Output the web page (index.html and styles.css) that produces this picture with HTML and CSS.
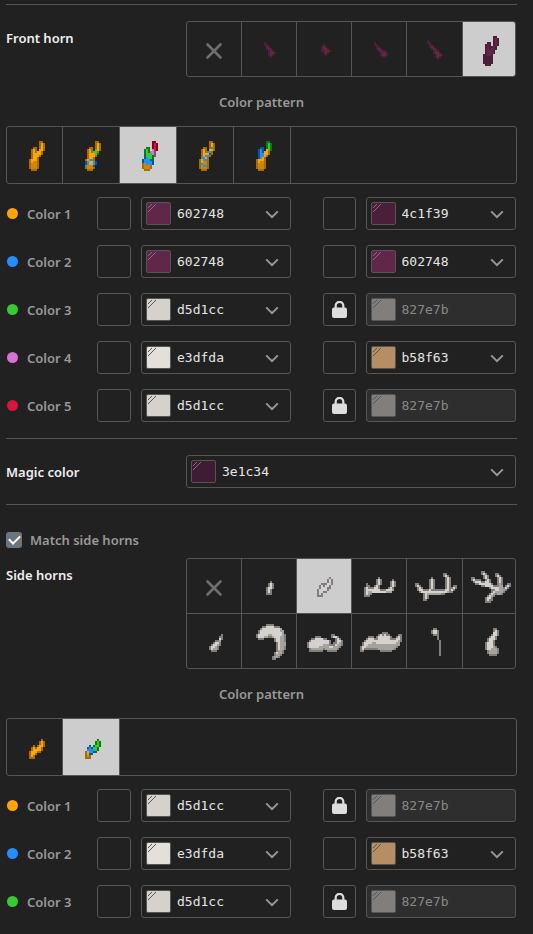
FILE: index.html
```html
<!DOCTYPE html>
<html lang="en">
<head>
<meta charset="utf-8">
<meta name="viewport" content="width=device-width, initial-scale=1">
<title>Horn editor</title>
<link rel="stylesheet" href="styles.css">
</head>
<body>
<svg class="symbols" aria-hidden="true">
  <symbol id="lock" viewBox="0 0 15 17"><path d="M3.7 8V4.6a3.8 3.8 0 0 1 7.6 0V8" fill="none" stroke="currentColor" stroke-width="2.2"/><rect y="6.6" width="15" height="10.4" rx="2" fill="currentColor"/></symbol>
  <symbol id="chevron" viewBox="0 0 14 9"><path d="M1.2 1.3 7 7.2l5.800-5.900" fill="none" stroke="currentColor" stroke-width="1.900"/></symbol>
  <symbol id="hatch" viewBox="0 0 9 9"><path d="M1 5 5 1M1 9 9 1" fill="none" stroke="currentColor" stroke-width="1"/></symbol>
  <symbol id="none" viewBox="0 0 54 54"><path d="m20.500 22.500 13 13m0-13-13 13" fill="none" stroke="#6f6f6f" stroke-width="2.600" stroke-linecap="round"/></symbol>
</svg>
<main class="editor">
  <hr>
  <section class="field-row">
    <h2 class="title">Front horn</h2>
    <div class="picker" id="front-types">
      <button class="cell" aria-label="None"><svg><use href="#none"/></svg></button>
      <button class="cell" aria-label="Horn 1" data-sprite="front1"></button>
      <button class="cell" aria-label="Horn 2" data-sprite="front2"></button>
      <button class="cell" aria-label="Horn 3" data-sprite="front3"></button>
      <button class="cell" aria-label="Horn 4" data-sprite="front4"></button>
      <button class="cell selected" aria-label="Horn 5" data-sprite="front5"></button>
    </div>
  </section>
  <h3 class="subtitle">Color pattern</h3>
  <div class="patterns">
    <button class="cell" aria-label="Pattern 1" data-sprite="pattern1"></button>
    <button class="cell" aria-label="Pattern 2" data-sprite="pattern2"></button>
    <button class="cell selected" aria-label="Pattern 3" data-sprite="pattern3"></button>
    <button class="cell" aria-label="Pattern 4" data-sprite="pattern4"></button>
    <button class="cell" aria-label="Pattern 5" data-sprite="pattern5"></button>
  </div>
  <div class="colors">
    <div class="color-row">
      <label class="name" for="f1"><i class="dot orange"></i>Color 1</label>
      <div class="pair"><button class="toggle" aria-label="Lock fill"></button><div class="color"><span class="swatch" style="background:#602748"><svg><use href="#hatch"/></svg></span><input id="f1" value="602748"><button class="open" aria-label="Choose color"><svg><use href="#chevron"/></svg></button></div></div>
      <div class="pair"><button class="toggle" aria-label="Lock outline"></button><div class="color"><span class="swatch" style="background:#4c1f39"><svg><use href="#hatch"/></svg></span><input aria-label="Outline 1" value="4c1f39"><button class="open" aria-label="Choose color"><svg><use href="#chevron"/></svg></button></div></div>
    </div>
    <div class="color-row">
      <label class="name" for="f2"><i class="dot blue"></i>Color 2</label>
      <div class="pair"><button class="toggle" aria-label="Lock fill"></button><div class="color"><span class="swatch" style="background:#602748"><svg><use href="#hatch"/></svg></span><input id="f2" value="602748"><button class="open" aria-label="Choose color"><svg><use href="#chevron"/></svg></button></div></div>
      <div class="pair"><button class="toggle" aria-label="Lock outline"></button><div class="color"><span class="swatch" style="background:#602748"><svg><use href="#hatch"/></svg></span><input aria-label="Outline 2" value="602748"><button class="open" aria-label="Choose color"><svg><use href="#chevron"/></svg></button></div></div>
    </div>
    <div class="color-row">
      <label class="name" for="f3"><i class="dot green"></i>Color 3</label>
      <div class="pair"><button class="toggle" aria-label="Lock fill"></button><div class="color"><span class="swatch light" style="background:#d5d1cc"><svg><use href="#hatch"/></svg></span><input id="f3" value="d5d1cc"><button class="open" aria-label="Choose color"><svg><use href="#chevron"/></svg></button></div></div>
      <div class="pair"><button class="toggle" aria-label="Unlock outline"><svg><use href="#lock"/></svg></button><div class="color locked"><span class="swatch light" style="background:#827e7b"><svg><use href="#hatch"/></svg></span><input aria-label="Outline 3" value="827e7b" disabled></div></div>
    </div>
    <div class="color-row">
      <label class="name" for="f4"><i class="dot orchid"></i>Color 4</label>
      <div class="pair"><button class="toggle" aria-label="Lock fill"></button><div class="color"><span class="swatch light" style="background:#e3dfda"><svg><use href="#hatch"/></svg></span><input id="f4" value="e3dfda"><button class="open" aria-label="Choose color"><svg><use href="#chevron"/></svg></button></div></div>
      <div class="pair"><button class="toggle" aria-label="Lock outline"></button><div class="color"><span class="swatch light" style="background:#b58f63"><svg><use href="#hatch"/></svg></span><input aria-label="Outline 4" value="b58f63"><button class="open" aria-label="Choose color"><svg><use href="#chevron"/></svg></button></div></div>
    </div>
    <div class="color-row">
      <label class="name" for="f5"><i class="dot crimson"></i>Color 5</label>
      <div class="pair"><button class="toggle" aria-label="Lock fill"></button><div class="color"><span class="swatch light" style="background:#d5d1cc"><svg><use href="#hatch"/></svg></span><input id="f5" value="d5d1cc"><button class="open" aria-label="Choose color"><svg><use href="#chevron"/></svg></button></div></div>
      <div class="pair"><button class="toggle" aria-label="Unlock outline"><svg><use href="#lock"/></svg></button><div class="color locked"><span class="swatch light" style="background:#827e7b"><svg><use href="#hatch"/></svg></span><input aria-label="Outline 5" value="827e7b" disabled></div></div>
    </div>
  </div>
  <hr>
  <section class="field-row">
    <label class="title" for="magic">Magic color</label>
    <div class="color"><span class="swatch" style="background:#3e1c34"><svg><use href="#hatch"/></svg></span><input id="magic" value="3e1c34"><button class="open" aria-label="Choose color"><svg><use href="#chevron"/></svg></button></div>
  </section>
  <hr>
  <div class="match"><input type="checkbox" id="match" checked><label for="match">Match side horns</label></div>
  <section class="field-row">
    <h2 class="title">Side horns</h2>
    <div class="picker two-lines">
      <button class="cell" aria-label="None"><svg><use href="#none"/></svg></button>
      <button class="cell" aria-label="Side 1" data-sprite="side1"></button>
      <button class="cell selected" aria-label="Side 2" data-sprite="side2"></button>
      <button class="cell" aria-label="Side 3" data-sprite="side3"></button>
      <button class="cell" aria-label="Side 4" data-sprite="side4"></button>
      <button class="cell" aria-label="Side 5" data-sprite="side5"></button>
      <button class="cell" aria-label="Side 6" data-sprite="side6"></button>
      <button class="cell" aria-label="Side 7" data-sprite="side7"></button>
      <button class="cell" aria-label="Side 8" data-sprite="side8"></button>
      <button class="cell" aria-label="Side 9" data-sprite="side9"></button>
      <button class="cell" aria-label="Side 10" data-sprite="side10"></button>
      <button class="cell" aria-label="Side 11" data-sprite="side11"></button>
    </div>
  </section>
  <h3 class="subtitle">Color pattern</h3>
  <div class="patterns">
    <button class="cell" aria-label="Pattern 1" data-sprite="sidePattern1"></button>
    <button class="cell selected" aria-label="Pattern 2" data-sprite="sidePattern2"></button>
  </div>
  <div class="colors">
    <div class="color-row">
      <label class="name" for="s1"><i class="dot orange"></i>Color 1</label>
      <div class="pair"><button class="toggle" aria-label="Lock fill"></button><div class="color"><span class="swatch light" style="background:#d5d1cc"><svg><use href="#hatch"/></svg></span><input id="s1" value="d5d1cc"><button class="open" aria-label="Choose color"><svg><use href="#chevron"/></svg></button></div></div>
      <div class="pair"><button class="toggle" aria-label="Unlock outline"><svg><use href="#lock"/></svg></button><div class="color locked"><span class="swatch light" style="background:#827e7b"><svg><use href="#hatch"/></svg></span><input aria-label="Side outline 1" value="827e7b" disabled></div></div>
    </div>
    <div class="color-row">
      <label class="name" for="s2"><i class="dot blue"></i>Color 2</label>
      <div class="pair"><button class="toggle" aria-label="Lock fill"></button><div class="color"><span class="swatch light" style="background:#e3dfda"><svg><use href="#hatch"/></svg></span><input id="s2" value="e3dfda"><button class="open" aria-label="Choose color"><svg><use href="#chevron"/></svg></button></div></div>
      <div class="pair"><button class="toggle" aria-label="Lock outline"></button><div class="color"><span class="swatch light" style="background:#b58f63"><svg><use href="#hatch"/></svg></span><input aria-label="Side outline 2" value="b58f63"><button class="open" aria-label="Choose color"><svg><use href="#chevron"/></svg></button></div></div>
    </div>
    <div class="color-row">
      <label class="name" for="s3"><i class="dot green"></i>Color 3</label>
      <div class="pair"><button class="toggle" aria-label="Lock fill"></button><div class="color"><span class="swatch light" style="background:#d5d1cc"><svg><use href="#hatch"/></svg></span><input id="s3" value="d5d1cc"><button class="open" aria-label="Choose color"><svg><use href="#chevron"/></svg></button></div></div>
      <div class="pair"><button class="toggle" aria-label="Unlock outline"><svg><use href="#lock"/></svg></button><div class="color locked"><span class="swatch light" style="background:#827e7b"><svg><use href="#hatch"/></svg></span><input aria-label="Side outline 3" value="827e7b" disabled></div></div>
    </div>
  </div>
</main>
<script src="sprites.js"></script>
</body>
</html>
```
FILE: styles.css
```css
* { box-sizing: border-box; }
body {
  margin: 0;
  background: #212121;
  color: #999;
  font: 600 13px/20px "Noto Sans", "Open Sans", sans-serif;
}
button { padding: 0; border: 0; background: none; color: inherit; font: inherit; cursor: pointer; }
.symbols { display: none; }
.editor { padding: 4px 16px 16px 6px; }
hr { height: 1px; margin: 16px 0; border: 0; background: #555; }
.editor > hr:first-child { margin-top: 0; }

.field-row { display: flex; margin-right: 1px; }
.title { flex: 0 0 180px; margin: 0; padding-top: 7px; color: #f0f0f0; font-size: 13px; font-weight: 600; line-height: 20px; }
.field-row > .color { flex: 1; }

.picker {
  flex: 1;
  display: grid;
  grid-template-columns: repeat(4, 55px) 56px 1fr;
  grid-template-rows: 54px;
  border: 1px solid #555;
  border-radius: 3px;
  overflow: hidden;
}
.picker.two-lines { grid-template-rows: 55px 54px; }
.two-lines .cell:nth-child(-n+6) { border-bottom: 1px solid #555; }
.cell { display: block; min-width: 0; border-right: 1px solid #555; overflow: hidden; }
.picker .cell:nth-child(6n) { border-right: 0; }
.picker .cell { display: flex; align-items: flex-start; justify-content: flex-start; }
.cell svg { flex: none; display: block; width: 54px; height: 54px; }
.selected { background: #cdcdcd; }

.subtitle { margin: 15px 0 14px; font-size: 13px; font-weight: 600; line-height: 20px; text-align: center; }
.patterns { display: flex; height: 58px; border: 1px solid #555; border-radius: 3px; overflow: hidden; }
.patterns .cell { flex: 0 0 57px; display: flex; align-items: flex-start; justify-content: flex-start; }
.patterns .cell:first-child { flex-basis: 56px; }

.colors { display: grid; grid-template-columns: minmax(0, 1fr); gap: 15px; margin: 13px 1px 0 0; }
.color-row { display: flex; align-items: center; }
.name { flex: 0 0 91px; display: flex; align-items: center; gap: 9px; padding-left: 1px; }
.dot { width: 11px; height: 11px; border-radius: 50%; }
.orange { background: #ffa500; }
.blue { background: #1e90ff; }
.green { background: #32cd32; }
.orchid { background: #da70d6; }
.crimson { background: #dc143c; }
.pair { flex: 1; min-width: 0; display: flex; gap: 10px; }
.pair + .pair { margin-left: 32px; }
.toggle { flex: 0 0 34px; display: grid; place-items: center; height: 33px; border: 1px solid #555; border-radius: 3px; color: #ddd; }
.pair + .pair .toggle { flex-basis: 33px; }
.toggle svg { width: 15px; height: 17px; }
.color { flex: 1; min-width: 0; display: flex; align-items: center; height: 33px; padding: 4px; border: 1px solid #555; border-radius: 3px; }
.swatch { flex: 0 0 25px; align-self: stretch; border: 1px solid #555; border-radius: 2px; color: #8a6a7e; }
.swatch.light { color: #555; }
.swatch svg { display: block; width: 9px; height: 9px; }
.color input { flex: 1; min-width: 0; padding: 0 0 0 6px; border: 0; outline: 0; background: none; color: #e6e6e6; font: 13px/20px "DejaVu Sans Mono", monospace; }
.open { flex: 0 0 28px; display: grid; place-items: center; height: 23px; padding-top: 2px; color: #999; }
.open svg { width: 14px; height: 9px; }
.locked { background: #2e2e2e; }
.locked input { color: #888; }

.match { display: flex; align-items: center; gap: 8px; margin: 25px 0 8px; }
.match input { appearance: none; width: 16px; height: 16px; margin: 0; border-radius: 3px; background: #6c757d; display: grid; place-items: center; }
.match input:checked::before { content: ""; width: 9px; height: 5px; margin-bottom: 3px; border: solid #fff; border-width: 0 0 2px 2px; transform: rotate(-45deg); }
```
FILE: sprites.js
```js
// Pixel art: [left, top, rows]; every character is one 2px square.
const palette = {
  v: '#602748', V: '#4c1f39',
  o: '#ffa500', q: '#d08600', O: '#a86c00',
  b: '#1e90ff', B: '#0a559f', g: '#32cd32', G: '#087d08',
  p: '#da70d6', P: '#8e478c', r: '#dc143c', R: '#86001c',
  l: '#d5d1cc', m: '#a6a29d', d: '#827e7b'
};
const sprites = {
  front1: [22, 20, ['V.....', 'VV....', '.vV...', '.VvV..', '..VvV.', '..VvvV', '..VvV.', '...V..']],
  front2: [24, 22, ['.V...', 'VvV..', 'VvvV.', 'VVvvV', '.VvV.', '..V..']],
  front3: [22, 20, ['V......', 'VV.....', '.VV....', '.VvV...', '..VvVV.', '...VvvV', '...VvvV', '....VV.']],
  front4: [20, 18, ['V.......', 'VV......', '.VV.....', '.VvV....', '..VvV...', '...VvV..', '...VvvV.', '....VvvV', '....VvV.', '.....V..']],
  front5: [20, 14, ['.....VV.', '.....VvV', '.....VvV', '..VV.VvV', '.VvV.VvV', '.VvVVvV.', '.VvVvvV.', '.VvvvV..', '.VvvvV..', 'VVvvV...', 'VVVVV...', 'VVVVV...', 'VVVVV...', 'VVVVV...', '.VVV....']],
  pattern1: [22, 14, ['.....OO.', '.....OoO', '.....OoO', '..OO.OoO', '.OoO.ooO', '.OoOooO.', '.OooooO.', '.OoooO..', '.OooO...', 'OoooO...', 'OoqqO...', 'OqqqO...', 'OqqqO...', 'OqqqO...', '.OOO....']],
  pattern2: [22, 14, ['.....OO.', '.....OoO', '.....OoO', '..OO.OoO', '.OoO.goO', '.OoOggO.', '.OooogG.', '.OoooO..', '.OooO...', 'OobbO...', 'BboobB..', 'BboobB..', 'bqqqB...', 'OqqqO...', '.OOO....']],
  pattern3: [22, 14, ['.....RR.', '.....RrR', '.....RrR', '..GG.RrR', '.GgG.prR', '.GgGppP.', '.GgggpP.', '.BgggGP.', '.BbggG..', 'BbbbGB..', 'BbbbbB..', 'OqbbbB..', 'OqqqO...', 'OqqqO...', '.OOO....']],
  pattern4: [22, 14, ['.....OO.', '.....OoO', '.....OoO', '..OO.ObO', '.OoO.ooO', '.OoObbO.', '.OoooBO.', '.OobbO..', '.bboO...', 'OobbO...', 'OoqqO...', 'ObqqO...', 'OqbbO...', 'OqqqO...', '.OOO....']],
  pattern5: [22, 14, ['.....GG.', '.....GgG', '.....GgG', '..BB.GgG', '.BbB.ogG', '.BbBooO.', '.BbbooO.', '.BbboO..', '.BboO...', 'OoooO...', 'OoqqO...', 'OqqqO...', 'OqqqO...', 'OqqqO...', '.OOO....']],
  side1: [24, 22, ['..d.', '.dld', '.dld', 'dlld', 'dld.', 'dld.', 'ddd.']],
  side2: [20, 18, ['......d.', '.....dld', '.....dld', '..dddlld', '.dldlld.', '.dllldd.', 'dlllld..', 'dlldd...', 'dld.....', 'ddd.....']],
  side3: [12, 18, ['.......d........', '......dld.....d.', '......dld....dld', '.d....dld....dld', '.dd..dld.....dld', 'dldddlld....dld.', 'dllllllldddlllm.', 'dlmmlllllllmmm..', 'dlmd............', 'ddd.............']],
  side4: [8, 14, ['..............dd.....', '..............dld....', '........d......dld...', '.......dld.....dld...', '.......dld.....dld...', 'dd.....dld.....dld...', 'dld....dld.....dld.dd', '.dld...dld.....dlddld', '.dlldddldddddddlldld.', '..dlllllllllllllmdd..', '....dlmmmmmmmdd......', '....dld..............', '....dld..............', '....dd...............']],
  side5: [8, 12, ['.....dd.............', '.....dld....dd......', '......dld...dld.....', 'dd....dld....dld....', 'dlddd..dld...dld....', '.dlllddlld...dld....', '..ddlllllld..dmd..dd', '.....ddlllldddmm.dld', '.........dllllmmdld.', '..........ddllmmmd..', '..........dlmmmmd...', '.........dlmdmmd....', '........dlmd........', '.......dlld.........', '.......dldd.........', '.......ddd..........']],
  side6: [22, 20, ['......d', '.....dd', '.....ld', '...ddm.', '..dlld.', '.dllmd.', 'dllmd..', 'dlmmd..', '.ddd...']],
  side7: [14, 10, ['.....dddd......', '...ddllllddd...', '..dlllllllllm..', '.dllllllllllmm.', '.dlllllllllllm.', 'dlllllmmlllllmd', 'dlllmmddmlllmmd', '.ddd.....dllmmd', '.........dllmmd', '..........dlmmm', '..........dlmmm', '..........dlmmd', '..........dlmmd', '..........dmmd.', '.........dlmmd.', '.........dmmd..', '........dmmd...', '........dd.....']],
  side8: [10, 20, ['............dd....', '....ddd.....dlld..', '..ddlllldd....dld.', '.dllllllllld..dlld', 'dlllllllllld.ddlmd', 'dlllllllmmmdddlmmd', 'dlllllmmmmmllmmmd.', '.dmmmmmmdmmmmmmd..', '.ddddddd..ddddd...']],
  side9: [8, 18, ['...........ddd.......', '.........dldldd....dd', '....ddd.dlllllld..dld', '...dlllddlllllldddlld', '..dllllllllllllllllmd', '.dllllmmllllllllllmm.', '.dllmmmmmmmmmmmmmmmm.', 'dllmmmmmmmmmmmmmmmd..', 'dldddddddmmmmmmmmd...', 'dd........dddddd.....']],
  side10: [24, 14, ['.dd..', 'dlld.', 'dlld.', '.ddd.', '...d.', '...d.', '....d', '....d', '....d', '....d', '....d', '....d', '....d', '....d']],
  side11: [22, 14, ['....dd.', '....dld', '....lld', '...dlld', '..dlld.', '.dllld.', '.dlld..', 'dllld..', 'dllld..', 'dlllmd.', 'dllmmmd', '.dmmmmd', '.dmmmmd', '..dddd.']],
  sidePattern1: [22, 20, ['......O.', '.....OoO', '.....OoO', '..O.OooO', '.OoOooO.', '.OooooO.', 'OoooOO..', 'OooO....', 'OoO.....', 'OOO.....']],
  sidePattern2: [22, 20, ['......G.', '.....GgG', '.....GgG', '..B.GggG', '.BbBggG.', '.bbbbgG.', 'OobbBG..', 'OoBB....', 'OqO.....', 'OOO.....']]
};
document.querySelectorAll('[data-sprite]').forEach(cell => {
  const [left, top, rows] = sprites[cell.dataset.sprite];
  let rects = '';
  rows.forEach((row, y) => [...row].forEach((c, x) => {
    if (palette[c]) rects += `<rect x="${left + x * 2}" y="${top + y * 2}" width="2" height="2" fill="${palette[c]}"/>`;
  }));
  cell.innerHTML = `<svg viewBox="0 0 54 54" shape-rendering="crispEdges" aria-hidden="true">${rects}</svg>`;
});
```
